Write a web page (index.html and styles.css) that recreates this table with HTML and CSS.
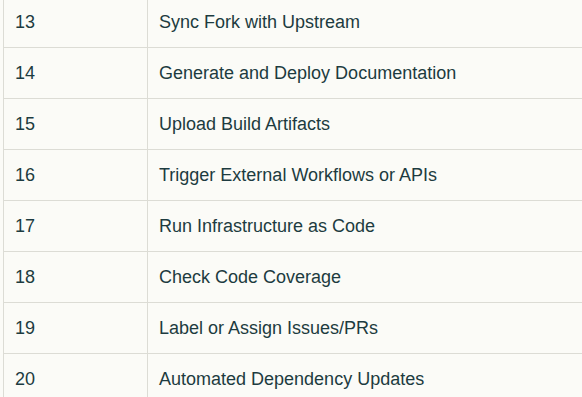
FILE: index.html
```html
<!DOCTYPE html>
<html lang="en">

<head>
  <meta charset="UTF-8">
  <meta name="viewport" content="width=device-width, initial-scale=1.0">
  <title>Workflows</title>
  <link rel="stylesheet" href="styles.css">
</head>

<body>
  <table class="workflow-table">
    <tbody>
      <tr><td class="num">13</td><td>Sync Fork with Upstream</td></tr>
      <tr><td class="num">14</td><td>Generate and Deploy Documentation</td></tr>
      <tr><td class="num">15</td><td>Upload Build Artifacts</td></tr>
      <tr><td class="num">16</td><td>Trigger External Workflows or APIs</td></tr>
      <tr><td class="num">17</td><td>Run Infrastructure as Code</td></tr>
      <tr><td class="num">18</td><td>Check Code Coverage</td></tr>
      <tr><td class="num">19</td><td>Label or Assign Issues/PRs</td></tr>
      <tr><td class="num">20</td><td>Automated Dependency Updates</td></tr>
    </tbody>
  </table>
</body>

</html>
```

FILE: styles.css
```css
body {
  margin: 0;
  padding: 0 0 0 3px;
  background-color: #fbfbf7;
  font-family: "Liberation Sans", Arial, sans-serif;
  color: #1d3b40;
  overflow: hidden;
}

.workflow-table {
  margin-top: -4px;
  width: 590px;
  border-collapse: collapse;
  font-size: 18px;
}

.workflow-table td {
  height: 51px;
  padding: 0 11px;
  border: 1px solid #dcdcd5;
  box-sizing: border-box;
}

.workflow-table td.num {
  width: 144px;
}
```
